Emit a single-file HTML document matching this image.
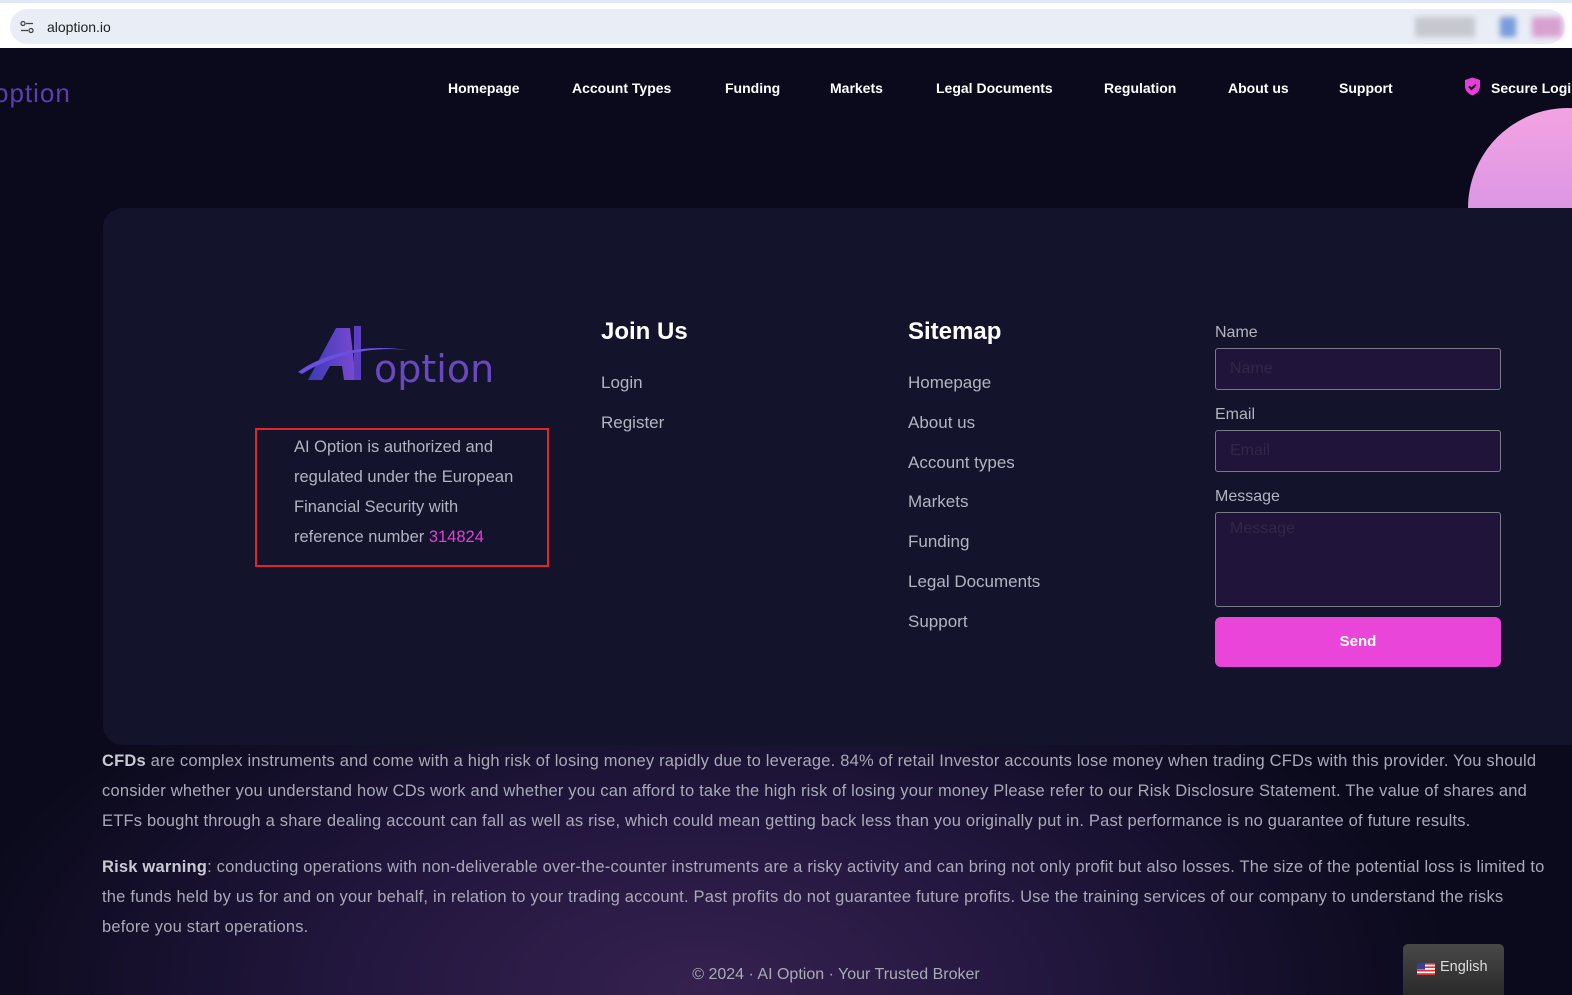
<!DOCTYPE html>
<html><head><meta charset="utf-8"><style>
*{margin:0;padding:0;box-sizing:border-box}
body{width:1572px;height:995px;overflow:hidden;font-family:"Liberation Sans",sans-serif;background:#0b0a1c;position:relative}
.bar{position:absolute;left:0;top:0;width:1572px;height:48px;background:#fff;border-top:3px solid #dfe7f5}
.pill{position:absolute;left:10px;top:6px;width:1555px;height:35px;border-radius:18px;background:#e9edf6}
.url{position:absolute;left:47px;top:16px;font-size:14px;color:#1f1f1f}
.page{position:absolute;left:0;top:48px;width:1572px;height:947px;background:radial-gradient(ellipse 750px 380px at 700px 940px,#36214f 0%,#23173f 45%,#0b0a1c 100%)}
.nav a{position:absolute;top:80px;color:#fff;font-weight:bold;font-size:14px;text-decoration:none;white-space:nowrap}
.circle{position:absolute;left:1468px;top:108px;width:200px;height:200px;border-radius:50%;background:linear-gradient(180deg,#f3a3e2,#c58ae6)}
.card{position:absolute;left:103px;top:208px;width:1500px;height:537px;border-radius:20px;background:#13132c}
.t{position:absolute;color:#b3b3c2;font-size:17px}
h3{position:absolute;color:#fff;font-size:24px;font-weight:bold}
.lbl{position:absolute;left:1215px;color:#b3b3c2;font-size:16px}
.in{position:absolute;left:1215px;width:286px;height:42px;border:1px solid #7a7a88;border-radius:3px;background:#21143a;color:#2f2848;font-size:16px;padding:11px 14px}
.disc{position:absolute;left:102px;width:1445px;color:#a9a9b8;font-size:16.5px;letter-spacing:0.2px;line-height:30px}
.disc b{color:#c9c9d4}
</style></head><body>
<div class="bar"><div class="pill"></div>
<svg style="position:absolute;left:20px;top:17px" width="14" height="14" viewBox="0 0 14 14"><circle cx="3" cy="3.5" r="2" fill="none" stroke="#444" stroke-width="1.3"/><line x1="6" y1="3.5" x2="13" y2="3.5" stroke="#444" stroke-width="1.3"/><circle cx="11" cy="10.5" r="2" fill="none" stroke="#444" stroke-width="1.3"/><line x1="1" y1="10.5" x2="8" y2="10.5" stroke="#444" stroke-width="1.3"/></svg>
<div class="url">aloption.io</div>
<div style="position:absolute;left:1415px;top:14px;width:60px;height:20px;background:#b8b8c0;filter:blur(3px);opacity:.7"></div>
<div style="position:absolute;left:1500px;top:14px;width:16px;height:20px;background:#4a7ad0;filter:blur(3px);opacity:.7"></div>
<div style="position:absolute;left:1532px;top:14px;width:30px;height:20px;background:#d080c0;filter:blur(3px);opacity:.7"></div>
</div>
<div class="page"></div>
<div style="position:absolute;left:-6px;top:78px;font-size:26px;color:#5c3fb2;letter-spacing:1px">option</div>
<div class="nav">
<a style="left:448px">Homepage</a><a style="left:572px">Account Types</a><a style="left:725px">Funding</a><a style="left:830px">Markets</a><a style="left:936px">Legal Documents</a><a style="left:1104px">Regulation</a><a style="left:1228px">About us</a><a style="left:1339px">Support</a><a style="left:1491px">Secure Login</a>
</div>
<svg style="position:absolute;left:1464px;top:77px" width="17" height="19" viewBox="0 0 17 19"><path d="M8.5 0.5L16 3v6c0 5-3.5 8-7.5 9.5C4.5 17 1 14 1 9V3z" fill="#e63fd8"/><path d="M5 9.5l2.5 2.5 4.5-4.5" stroke="#1a0a20" stroke-width="2" fill="none"/></svg>
<div class="circle"></div>
<div class="card"></div>
<svg style="position:absolute;left:296px;top:322px" width="232" height="72" viewBox="0 0 232 72">
<defs><linearGradient id="g" x1="0" y1="0" x2="1" y2="0"><stop offset="0" stop-color="#3b3ab8"/><stop offset="1" stop-color="#7a4ad0"/></linearGradient></defs>
<path d="M12 58L40 6h14l6 52h-12l-2-14H34l-8 14z" fill="url(#g)"/>
<rect x="58" y="4" width="7" height="54" fill="#5b3fc0"/>
<path d="M2 50C30 30 70 22 112 28C70 24 35 34 6 52z" fill="#6a50e0"/>
<text x="78" y="60" font-family="DejaVu Sans,sans-serif" font-size="38" fill="#6a48c0">option</text>
</svg>
<div style="position:absolute;left:255px;top:428px;width:294px;height:139px;border:2px solid #e0262b"></div>
<div class="t" style="left:294px;top:432px;line-height:30px;font-size:16.5px">AI Option is authorized and<br>regulated under the European<br>Financial Security with<br>reference number <span style="color:#e23fd6">314824</span></div>
<h3 style="left:601px;top:318px">Join Us</h3>
<div class="t" style="left:601px;top:363px;line-height:40px">Login<br>Register</div>
<h3 style="left:908px;top:318px">Sitemap</h3>
<div class="t" style="left:908px;top:363px;line-height:39.8px">Homepage<br>About us<br>Account types<br>Markets<br>Funding<br>Legal Documents<br>Support</div>
<div class="lbl" style="top:324px">Name</div><div class="in" style="top:348px">Name</div>
<div class="lbl" style="top:406px">Email</div><div class="in" style="top:430px">Email</div>
<div class="lbl" style="top:488px">Message</div><div class="in" style="top:512px;height:95px;padding-top:7px">Message</div>
<div style="position:absolute;left:1215px;top:617px;width:286px;height:50px;border-radius:6px;background:#e945d9;color:#fff;font-weight:bold;font-size:15px;text-align:center;line-height:50px">Send</div>
<div class="disc" style="top:746px"><b>CFDs</b> are complex instruments and come with a high risk of losing money rapidly due to leverage. 84% of retail Investor accounts lose money when trading CFDs with this provider. You should consider whether you understand how CDs work and whether you can afford to take the high risk of losing your money Please refer to our Risk Disclosure Statement. The value of shares and ETFs bought through a share dealing account can fall as well as rise, which could mean getting back less than you originally put in. Past performance is no guarantee of future results.</div>
<div class="disc" style="top:852px"><b>Risk warning</b>: conducting operations with non-deliverable over-the-counter instruments are a risky activity and can bring not only profit but also losses. The size of the potential loss is limited to the funds held by us for and on your behalf, in relation to your trading account. Past profits do not guarantee future profits. Use the training services of our company to understand the risks before you start operations.</div>
<div style="position:absolute;left:0;width:1672px;top:966px;text-align:center;color:#a9a9b8;font-size:16px">© 2024 · AI Option · Your Trusted Broker</div>
<div style="position:absolute;left:1403px;top:944px;width:101px;height:51px;border-radius:5px 5px 0 0;background:linear-gradient(#484848,#2a2a2a)"></div>
<svg style="position:absolute;left:1417px;top:963px" width="18" height="12" viewBox="0 0 18 12"><rect width="18" height="12" fill="#fff"/><g fill="#d33"><rect y="0" width="18" height="1.7"/><rect y="3.4" width="18" height="1.7"/><rect y="6.8" width="18" height="1.7"/><rect y="10.2" width="18" height="1.8"/></g><rect width="8" height="6.5" fill="#3c3b9e"/></svg>
<div style="position:absolute;left:1440px;top:959px;color:#ddd;font-size:14.5px">English</div>
</body></html>
